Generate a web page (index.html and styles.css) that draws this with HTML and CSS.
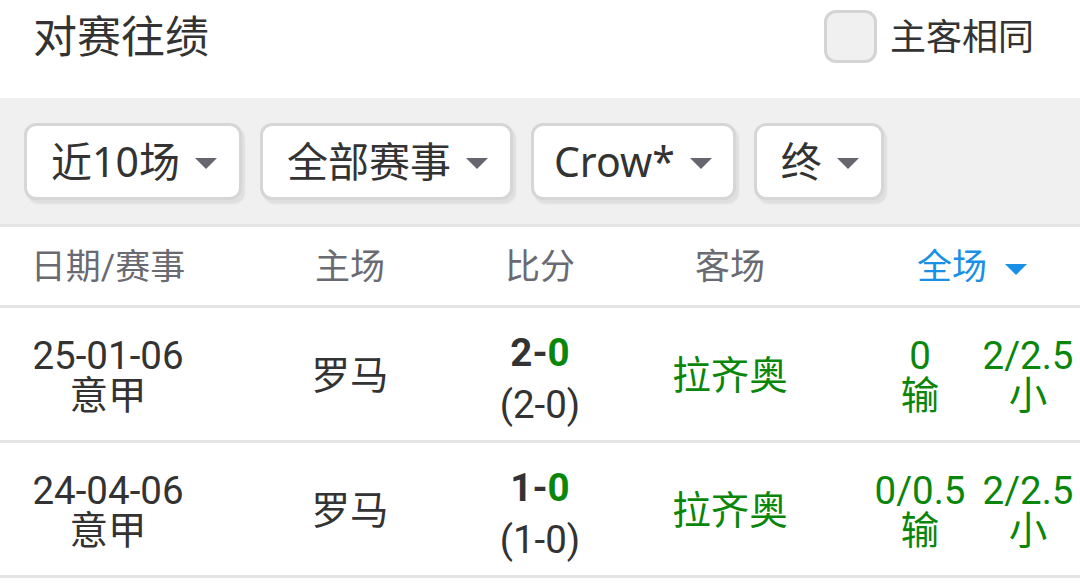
FILE: index.html
```html
<!DOCTYPE html>
<html lang="zh-CN">
<head>
<meta charset="utf-8">
<title>对赛往绩</title>
<link rel="stylesheet" href="styles.css">
</head>
<body>
<div class="page">
  <div class="top">
    <div class="title">对赛往绩</div>
    <label class="same">
      <span class="box"></span>
      <span class="same-text">主客相同</span>
    </label>
  </div>
  <div class="filters">
    <div class="sel"><span class="sel-text">近10场</span><span class="tri"></span></div>
    <div class="sel"><span class="sel-text">全部赛事</span><span class="tri"></span></div>
    <div class="sel sel-latin"><span class="sel-text">Crow*</span><span class="tri"></span></div>
    <div class="sel"><span class="sel-text">终</span><span class="tri"></span></div>
  </div>
  <div class="grid head">
    <div class="cell">日期/赛事</div>
    <div class="cell">主场</div>
    <div class="cell">比分</div>
    <div class="cell">客场</div>
    <div class="cell span2 blue">全场<span class="tri tri-blue"></span></div>
  </div>
  <div class="grid row">
    <div class="cell stack"><span>25-01-06</span><span>意甲</span></div>
    <div class="cell">罗马</div>
    <div class="cell stack score"><span class="ft">2-<em>0</em></span><span class="ht">(2-0)</span></div>
    <div class="cell green">拉齐奥</div>
    <div class="cell stack green"><span>0</span><span>输</span></div>
    <div class="cell stack green"><span>2/2.5</span><span>小</span></div>
  </div>
  <div class="grid row">
    <div class="cell stack"><span>24-04-06</span><span>意甲</span></div>
    <div class="cell">罗马</div>
    <div class="cell stack score"><span class="ft">1-<em>0</em></span><span class="ht">(1-0)</span></div>
    <div class="cell green">拉齐奥</div>
    <div class="cell stack green"><span>0/0.5</span><span>输</span></div>
    <div class="cell stack green"><span>2/2.5</span><span>小</span></div>
  </div>
</div>
</body>
</html>
```

FILE: styles.css
```css
* { box-sizing: border-box; }
html, body { margin: 0; padding: 0; background: #fff; }
body {
  width: 1080px;
  font-family: Roboto, "Noto Sans CJK SC", sans-serif;
  color: #333;
}
.top {
  height: 98px;
  padding: 0 46px 26px 33px;
  display: flex;
  align-items: center;
  justify-content: space-between;
}
.title {
  font-size: 44px;
  color: #333;
  line-height: 1;
  margin-top: 4px;
}
.same {
  display: flex;
  align-items: center;
  gap: 13px;
}
.box {
  width: 53px;
  height: 53px;
  border: 3px solid #d4d4d4;
  border-radius: 12px;
  background: #f0f0f0;
}
.same-text {
  font-size: 36px;
  color: #333;
  line-height: 1;
  margin-top: 4px;
}
.filters {
  background: #f0f0f0;
  height: 129px;
  padding: 25px 24px 0 24px;
  display: flex;
  align-items: flex-start;
  gap: 18px;
  border-bottom: 3px solid #e4e4e4;
}
.sel {
  height: 77px;
  background: #fff;
  border: 3px solid #d6d6d6;
  border-radius: 12px;
  box-shadow: 3px 4px 2px rgba(0, 0, 0, 0.07);
  display: flex;
  align-items: center;
  gap: 15px;
  padding: 0 22px 0 24px;
}
.sel-text {
  font-family: "Noto Sans", "Noto Sans CJK SC", sans-serif;
  font-size: 41px;
  line-height: 1;
  color: #333;
}
.sel-latin {
  padding-left: 20px;
  padding-right: 21px;
}
.tri {
  width: 0;
  height: 0;
  border-left: 11px solid transparent;
  border-right: 11px solid transparent;
  border-top: 11px solid #66666e;
  margin-top: 4px;
}
.grid {
  display: grid;
  grid-template-columns: 216px 268px 112px 268px 112px 104px;
  border-bottom: 3px solid #e4e4e4;
}
.head {
  height: 81px;
}
.head .cell {
  font-size: 35px;
  color: #6a6a72;
}
.head .cell.blue {
  color: #1a8fe6;
  gap: 18px;
}
.tri-blue {
  border-top-color: #1a8fe6;
  margin-top: 2px;
}
.cell {
  display: flex;
  align-items: center;
  justify-content: center;
  white-space: nowrap;
  font-size: 38.5px;
  line-height: 40px;
  padding-top: 4px;
}
.span2 { grid-column: span 2; }
.row {
  height: 135px;
}
.stack {
  flex-direction: column;
}
.stack span { display: block; text-align: center; }
.green { color: #0a860a; }
.score { padding-top: 10px; }
.ft { font-weight: bold; margin-bottom: 12px; }
.ft em { font-style: normal; color: #0a860a; }
.ht { color: #333; }
```
